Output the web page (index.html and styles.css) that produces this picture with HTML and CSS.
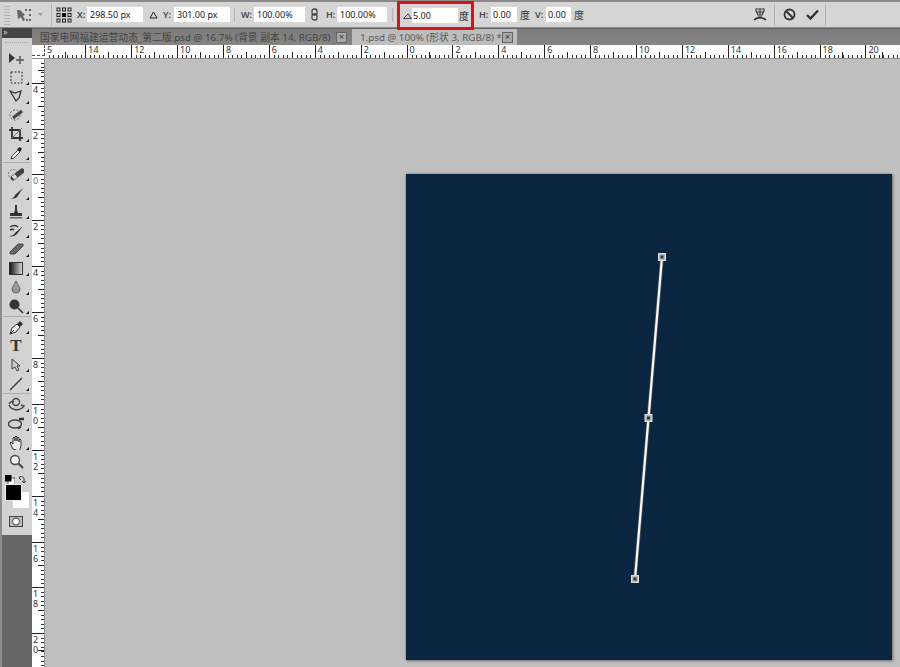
FILE: index.html
```html
<!DOCTYPE html>
<html lang="zh">
<head>
  <meta charset="UTF-8" />
  <title>Photoshop</title>
  <link rel="stylesheet" href="styles.css">
</head>
<body>

<!-- OPTIONS BAR -->
<div class="optionbar">
  <div class="grip"></div>
  <svg class="tool-ico" width="16" height="14" viewBox="0 0 16 14"><path d="M1 2h3l5 5-2 1 2 4-2 1-2-4-3 2z" fill="#666"/><g fill="#666"><rect x="9" y="1" width="2" height="2"/><rect x="13" y="1" width="2" height="2"/><rect x="13" y="6" width="2" height="2"/><rect x="13" y="11" width="2" height="2"/><rect x="10" y="11" width="2" height="2"/></g></svg>
  <svg class="arrow" width="5" height="3" viewBox="0 0 5 3"><path d="M0 0h5L2.500 3z" fill="#999"/></svg>
  <div class="sep sep-a"></div>
  <svg class="ref-ico" width="16" height="16" viewBox="0 0 16 16">
    <g fill="none" stroke="#222"><rect x="1" y="1" width="3" height="3"/><rect x="6.500" y="1" width="3" height="3"/><rect x="12" y="1" width="3" height="3"/><rect x="1" y="6.500" width="3" height="3"/><rect x="12" y="6.500" width="3" height="3"/><rect x="1" y="12" width="3" height="3"/><rect x="6.500" y="12" width="3" height="3"/><rect x="12" y="12" width="3" height="3"/></g>
    <rect x="6" y="6" width="4" height="4" fill="#111"/>
  </svg>
  <span class="lbl lbl-x">X:</span>
  <div class="field f56">298.50 px</div>
  <svg class="delta" width="9" height="8" viewBox="0 0 9 8"><path d="M4.500 1L8 7H1z" fill="none" stroke="#222"/></svg>
  <span class="lbl lbl-y">Y:</span>
  <div class="field f56">301.00 px</div>
  <div class="sep sep-b"></div>
  <span class="lbl lbl-w">W:</span>
  <div class="field f51">100.00%</div>
  <svg class="chain" width="7" height="13" viewBox="0 0 7 13"><rect x="1" y="1" width="5" height="6" rx="2" fill="none" stroke="#444" stroke-width="1.300"/><rect x="1" y="6" width="5" height="6" rx="2" fill="none" stroke="#444" stroke-width="1.300"/></svg>
  <span class="lbl lbl-h">H:</span>
  <div class="field f50">100.00%</div>
  <div class="sep sep-c"></div>
  <div class="rotate-box">
    <svg class="angle" width="9" height="7" viewBox="0 0 9 7"><path d="M0.500 6.500h8L5 2z" fill="none" stroke="#444"/></svg>
    <div class="field f46">5.00</div>
    <span class="deg">度</span>
  </div>
  <span class="lbl lbl-sh">H:</span>
  <div class="field f26">0.00</div>
  <span class="deg deg-b">度</span>
  <span class="lbl lbl-v">V:</span>
  <div class="field f25">0.00</div>
  <span class="deg deg-b">度</span>

  <div class="commit">
    <svg width="14" height="15" viewBox="0 0 14 15"><path d="M3 2h8v2l-2 4H5L3 4zM7 2v6M3.500 5h7M5 10h4" fill="none" stroke="#333" stroke-width="1.100"/><path d="M1 13c3-3 9-3 12 0" fill="none" stroke="#222" stroke-width="1.400"/></svg>
    <div class="sep sep-d"></div>
    <svg class="cancel" width="13" height="13" viewBox="0 0 13 13"><circle cx="6.500" cy="6.500" r="5" fill="none" stroke="#333" stroke-width="1.800"/><path d="M3 3l7 7" stroke="#333" stroke-width="1.800"/></svg>
    <svg class="check" width="13" height="11" viewBox="0 0 13 11"><path d="M1 6l3.500 3.500L12 1.500" fill="none" stroke="#333" stroke-width="2.400"/></svg>
    <div class="sep sep-e"></div>
  </div>
</div>

<div class="main">

  <!-- TOOLS -->
  <div class="toolbar">
    <div class="collapse">»</div>
    <div class="tool-grip"></div>
    <div class="tools">
      <div class="tool tool-first"><svg width="18" height="14" viewBox="0 0 18 14"><path d="M2 1l6 5-6 5z" fill="#333"/><path d="M13 4v8M9 8h8" stroke="#555" stroke-width="1.500"/></svg></div>
      <div class="tool more"><svg width="13" height="13" viewBox="0 0 13 13"><rect x="1" y="1" width="11" height="11" fill="none" stroke="#333" stroke-dasharray="2 1.500"/></svg></div>
      <div class="tool more"><svg width="14" height="14" viewBox="0 0 14 14"><path d="M1 2l5 2 6-2-2 7-3 3-3-5z" fill="none" stroke="#333" stroke-width="1.300"/></svg></div>
      <div class="tool more"><svg width="15" height="14" viewBox="0 0 15 14"><circle cx="6" cy="7" r="5" fill="none" stroke="#666" stroke-dasharray="2 1.500"/><path d="M4 10l9-7" stroke="#444" stroke-width="3"/></svg></div>
      <div class="tool more"><svg width="14" height="14" viewBox="0 0 14 14"><path d="M3 0v11h11M0 3h11v11" fill="none" stroke="#333" stroke-width="1.800"/><path d="M3 11L13 1" stroke="#777"/></svg></div>
      <div class="tool more"><svg width="14" height="15" viewBox="0 0 14 15"><path d="M2 13l1-3 6-6 2 2-6 6z" fill="#eee" stroke="#444"/><path d="M8 3l3-2 2 2-2 3z" fill="#222"/></svg></div>
      <div class="tool-sep"></div>
      <div class="tool more"><svg width="16" height="14" viewBox="0 0 16 14"><circle cx="5" cy="7" r="4.500" fill="none" stroke="#777" stroke-dasharray="2 1.500"/><path d="M5 11l9-7" stroke="#444" stroke-width="5" stroke-linecap="round"/><path d="M5 11l3-2.400" stroke="#ddd" stroke-width="4"/></svg></div>
      <div class="tool more"><svg width="16" height="14" viewBox="0 0 16 14"><path d="M1 12c3 1 5 0 6-3l8-7-6 9c-2 2-5 2-8 1z" fill="#333"/></svg></div>
      <div class="tool more"><svg width="14" height="15" viewBox="0 0 14 15"><path d="M6 1h2v5l1 3h4v3H1V9h4l1-3z" fill="#333"/><rect x="1" y="13" width="12" height="1.500" fill="#666"/></svg></div>
      <div class="tool more"><svg width="16" height="14" viewBox="0 0 16 14"><path d="M1 12c3 0 5-1 6-3l8-7-6 8c-2 2-5 3-8 2z" fill="#333"/><path d="M2 3c3-2 6-2 8 0M2 6c2-1 3-1 4 0" fill="none" stroke="#333" stroke-width="1.500"/></svg></div>
      <div class="tool more"><svg width="15" height="12" viewBox="0 0 15 12"><path d="M1 9l8-8h5v2l-8 8H1z" fill="#666" stroke="#444"/></svg></div>
      <div class="tool more"><svg width="14" height="13" viewBox="0 0 14 13"><defs><linearGradient id="grad"><stop offset="0" stop-color="#111"/><stop offset="1" stop-color="#ddd"/></linearGradient></defs><rect x="0.500" y="0.500" width="13" height="12" fill="url(#grad)" stroke="#333"/></svg></div>
      <div class="tool more"><svg width="10" height="14" viewBox="0 0 10 14"><path d="M5 1c2 4 4 6 4 8a4 4 0 0 1-8 0c0-2 2-4 4-8z" fill="#999" stroke="#666"/></svg></div>
      <div class="tool more"><svg width="15" height="15" viewBox="0 0 15 15"><circle cx="5.500" cy="5.500" r="5" fill="#333"/><path d="M9 9l5 5" stroke="#333" stroke-width="1.600"/></svg></div>
      <div class="tool-sep"></div>
      <div class="tool more"><svg width="15" height="15" viewBox="0 0 15 15"><path d="M1 14l2-6 5-4 3 3-4 5z" fill="#eee" stroke="#333"/><path d="M8 4l3-3 3 3-3 3z" fill="#333"/><path d="M1 14l4-4" stroke="#333"/></svg></div>
      <div class="tool"><span class="t-glyph">T</span></div>
      <div class="tool more"><svg width="10" height="14" viewBox="0 0 10 14"><path d="M1 1v10l3-2 2 4 2-1-2-4h3z" fill="#ccc" stroke="#444"/></svg></div>
      <div class="tool more"><svg width="14" height="14" viewBox="0 0 14 14"><path d="M1 13L13 1" stroke="#333" stroke-width="1.200"/></svg></div>
      <div class="tool-sep"></div>
      <div class="tool more"><svg width="17" height="15" viewBox="0 0 17 15"><circle cx="8" cy="5" r="3.500" fill="none" stroke="#444" stroke-width="1.400"/><path d="M1 7c2-3 4-3 5-2M1 8c2 5 9 6 13 3l2-2-3-1" fill="none" stroke="#444" stroke-width="1.500"/></svg></div>
      <div class="tool more"><svg width="18" height="15" viewBox="0 0 18 15"><path d="M12 3h5" stroke="#333" stroke-width="2.500"/><ellipse cx="8" cy="8" rx="6.500" ry="4" fill="none" stroke="#444" stroke-width="1.400"/><path d="M11 13l3-2" stroke="#333" stroke-width="1.500"/></svg></div>
      <div class="tool more"><svg width="15" height="15" viewBox="0 0 15 15"><path d="M4 14L1 8l1-1 2 2V3l1-1 1 1v3-4l1-1 1 1v4-3l1-1 1 1v4-2l1-1 1 1v6l-1 3-1 2z" fill="#eee" stroke="#333" stroke-linejoin="round"/></svg></div>
      <div class="tool"><svg width="15" height="15" viewBox="0 0 15 15"><circle cx="6" cy="6" r="4.500" fill="#eee" stroke="#444" stroke-width="1.300"/><path d="M9.500 9.500L14 14" stroke="#444" stroke-width="2"/></svg></div>
    </div>

    <div class="swap-row">
      <svg width="10" height="10" viewBox="0 0 10 10"><rect x="3" y="3" width="7" height="7" fill="#fff" stroke="#555"/><rect x="0" y="0" width="6.500" height="6.500" fill="#000"/></svg>
      <svg width="9" height="9" viewBox="0 0 9 9"><path d="M1 3c1-2 3-2 5 0v5M1 3l2-2M1 3l2 2M6 8L4 6M6 8l2-2" fill="none" stroke="#333"/></svg>
    </div>
    <div class="swatches">
      <div class="swatch-bg"></div>
      <div class="swatch-fg"></div>
    </div>
    <div class="mask-btn"><svg width="14" height="11" viewBox="0 0 14 11"><rect x="0.500" y="0.500" width="13" height="10" fill="#bbb" stroke="#444"/><circle cx="7" cy="5.500" r="3.500" fill="#fff" stroke="#444"/></svg></div>
    <div class="toolbar-rest"></div>
  </div>

  <div class="workspace">

    <!-- DOCUMENT TABS -->
    <div class="tabs">
      <div class="tab">
        <span>国家电网福建运营动态_第二版.psd @ 16.7% (背景 副本 14, RGB/8)</span>
        <span class="tab-x">×</span>
      </div>
      <div class="tab active">
        <span>1.psd @ 100% (形状 3, RGB/8) *</span>
        <span class="tab-x">×</span>
      </div>
    </div>

    <!-- RULERS -->
    <div class="hruler">
      <div class="corner"></div>
      <div class="hcell first">5</div>
      <div class="hcell">14</div>
      <div class="hcell">12</div>
      <div class="hcell">10</div>
      <div class="hcell">8</div>
      <div class="hcell">6</div>
      <div class="hcell">4</div>
      <div class="hcell">2</div>
      <div class="hcell">0</div>
      <div class="hcell">2</div>
      <div class="hcell">4</div>
      <div class="hcell">6</div>
      <div class="hcell">8</div>
      <div class="hcell">10</div>
      <div class="hcell">12</div>
      <div class="hcell">14</div>
      <div class="hcell">16</div>
      <div class="hcell">18</div>
      <div class="hcell last">20</div>
    </div>

    <div class="stage">
      <div class="vruler">
        <div class="vcell first"></div>
        <div class="vcell">4</div>
        <div class="vcell">2</div>
        <div class="vcell zero">0</div>
        <div class="vcell">2</div>
        <div class="vcell">4</div>
        <div class="vcell">6</div>
        <div class="vcell">8</div>
        <div class="vcell">1 0</div>
        <div class="vcell">1 2</div>
        <div class="vcell">1 4</div>
        <div class="vcell">1 6</div>
        <div class="vcell">1 8</div>
        <div class="vcell last">2 0</div>
      </div>

      <div class="canvas">
        <div class="doc">
          <svg class="shape" width="486" height="486" viewBox="0 0 486 486">
            <line x1="256" y1="83" x2="229" y2="405" stroke="#555" stroke-width="3.600"/>
            <line x1="256" y1="83" x2="229" y2="405" stroke="#f8f8f8" stroke-width="2.200"/>
            <g fill="#b5b5b5" stroke="#ddd">
              <rect x="252.500" y="79.500" width="7" height="7"/>
              <rect x="239" y="240.500" width="7" height="7"/>
              <rect x="225.500" y="401.500" width="7" height="7"/>
            </g>
            <g fill="#333">
              <rect x="254.500" y="81.500" width="3" height="3"/>
              <rect x="241" y="242.500" width="3" height="3"/>
              <rect x="227.500" y="403.500" width="3" height="3"/>
            </g>
          </svg>
        </div>
      </div>
    </div>

  </div>
</div>

</body>
</html>
```
FILE: styles.css
```css
html, body {
  margin: 0;
  height: 100%;
}

body {
  width: 900px;
  height: 667px;
  overflow: hidden;
  display: flex;
  flex-direction: column;
  background: #bfbfbf;
  color: #222;
  font-family: "Noto Sans", "Noto Sans CJK SC", sans-serif;
  font-size: 9px;
}

/* options bar */
.optionbar {
  height: 28px;
  box-sizing: border-box;
  flex: none;
  display: flex;
  align-items: center;
  background: #d5d5d5;
  border-top: 2px solid #8b8b8b;
  border-bottom: 1px solid #8a8a8a;
}

.grip {
  width: 6px;
  height: 20px;
  margin-left: 4px;
  background: repeating-linear-gradient(0deg, #b0b0b0 0 1px, transparent 1px 3px);
}

.tool-ico { margin-left: 6px; }
.arrow { margin-left: 6px; }

.sep {
  width: 1px;
  height: 22px;
  background: #b4b4b4;
  flex: none;
}

.sep-a { margin-left: 8px; }
.sep-b { margin-left: 4px; height: 14px; }
.sep-c { margin-left: 5px; height: 14px; }
.sep-d { margin: 0 7px; }
.sep-e { margin-left: 6px; }

.ref-ico { margin-left: 4px; }

.lbl {
  flex: none;
  color: #444;
  font-weight: 600;
}

.lbl-x { margin-left: 5px; width: 10px; }
.lbl-y { margin-left: 5px; width: 11px; }
.lbl-w { margin-left: 6px; width: 13px; }
.lbl-h { margin-left: 8px; width: 11px; }
.lbl-sh { margin-left: 5px; width: 12px; }
.lbl-v { margin-left: 4px; width: 11px; }

.field {
  height: 15px;
  line-height: 15px;
  flex: none;
  box-sizing: border-box;
  padding-left: 3px;
  background: #fff;
  white-space: nowrap;
}

.f56 { width: 56px; }
.f51 { width: 51px; }
.f50 { width: 50px; }
.f46 { width: 46px; padding-left: 1px; }
.f26 { width: 26px; padding-left: 2px; }
.f25 { width: 25px; padding-left: 2px; }

.delta { margin-left: 6px; }
.chain { margin-left: 6px; }

.rotate-box {
  flex: none;
  position: relative;
  z-index: 2;
  width: 77px;
  height: 29px;
  margin: 2px 0 0 4px;
  box-sizing: border-box;
  display: flex;
  align-items: center;
  border: 3px solid #d8121a;
}

.angle { margin-left: 3px; }

.deg {
  width: 11px;
  margin-left: 1px;
  font-size: 10px;
  color: #333;
  flex: none;
}

.deg-b { margin-left: 3px; }

.commit {
  margin-left: auto;
  margin-right: 74px;
  display: flex;
  align-items: center;
}

.cancel { margin-left: 1px; }
.check { margin-left: 10px; }

/* layout below the options bar */
.main {
  flex: 1;
  display: flex;
  min-height: 0;
}

/* tools */
.toolbar {
  width: 30px;
  flex: none;
  display: flex;
  flex-direction: column;
  background: #d2d2d2;
  border-left: 2px solid #8c8c8c;
}

.collapse {
  height: 10px;
  line-height: 8px;
  padding-left: 1px;
  background: #444;
  color: #ccc;
  font-size: 9px;
}

.tool-grip {
  height: 1px;
  margin: 4px 3px 6px;
  border-top: 1px dotted #aaa;
}

.tools {
  display: flex;
  flex-direction: column;
}

.tool {
  height: 18.9px;
  flex: none;
  position: relative;
  box-sizing: border-box;
  padding-right: 2px;
  display: flex;
  align-items: center;
  justify-content: center;
}

.tool-first { height: 18px; }

.more::after {
  content: "";
  position: absolute;
  right: 3px;
  bottom: 2px;
  border-left: 3px solid transparent;
  border-bottom: 3px solid #111;
}

.tool-sep {
  height: 1px;
  margin: 0 1px 1px;
  background: #adadad;
}

.t-glyph {
  font-family: "Liberation Serif", serif;
  font-size: 17px;
  font-weight: bold;
  color: #333;
}

.swap-row {
  display: flex;
  justify-content: space-between;
  padding: 0 5px 0 3px;
  margin-top: 4px;
  height: 9px;
}

.swatches {
  position: relative;
  height: 28px;
  flex: none;
}

.swatch-fg {
  position: absolute;
  left: 3px;
  top: 0;
  width: 15px;
  height: 15px;
  background: #000;
  border: 1px solid #eee;
}

.swatch-bg {
  position: absolute;
  left: 11px;
  top: 8px;
  width: 16px;
  height: 16px;
  background: #fff;
}

.mask-btn {
  height: 20px;
  flex: none;
  padding-right: 2px;
  display: flex;
  align-items: center;
  justify-content: center;
}

.toolbar-rest {
  flex: 1;
  margin-top: 3px;
  background: #666;
}

/* tabs */
.workspace {
  flex: 1;
  min-width: 0;
  display: flex;
  flex-direction: column;
}

.tabs {
  height: 17px;
  flex: none;
  display: flex;
  background: linear-gradient(#7b7b7b, #858585);
  border-top: 1px solid #666;
  box-sizing: border-box;
  color: #444;
  font-size: 9.8px;
}

.tab {
  width: 320px;
  box-sizing: border-box;
  padding: 0 5px 0 8px;
  display: flex;
  justify-content: space-between;
  align-items: center;
  white-space: nowrap;
}

.tab.active {
  width: 165px;
  background: #bdbdbd;
  color: #5a5a5a;
}

.tab-x {
  width: 9px;
  height: 9px;
  line-height: 8px;
  text-align: center;
  background: #a8a8a8;
  border: 1px solid #666;
  color: #333;
  font-size: 9px;
  flex: none;
}

/* rulers */
.hruler {
  height: 14px;
  box-sizing: border-box;
  flex: none;
  display: flex;
  background: #fff;
  border-bottom: 1px solid #8c8c8c;
  font-size: 9px;
  line-height: 10px;
  color: #333;
}

.corner {
  width: 13px;
  flex: none;
  box-sizing: border-box;
  border-right: 1px dashed #555;
  border-bottom: 1px dashed #555;
  height: 11px;
}

.hcell {
  width: 45.9px;
  flex: none;
  box-sizing: border-box;
  padding-left: 2px;
  border-left: 1px solid #222;
  background:
    linear-gradient(#222, #222) 50% 100% / 1px 6px no-repeat,
    repeating-linear-gradient(90deg, transparent 0 3.6px, #333 3.6px 4.59px) 0 100% / 100% 3px no-repeat;
}

.hcell.first {
  width: 40.3px;
  border-left: 0;
}

.hcell.last { width: 33px; }

.stage {
  flex: 1;
  min-height: 0;
  display: flex;
}

.vruler {
  width: 13px;
  flex: none;
  background: #fff;
  border-right: 1px solid #8c8c8c;
  box-sizing: border-box;
  font-size: 9px;
  line-height: 10px;
  color: #333;
}

.vcell {
  height: 45.9px;
  box-sizing: border-box;
  padding: 1px 6px 0 1px;
  word-break: break-all;
  border-top: 1px solid #222;
  background:
    linear-gradient(#222, #222) 100% 50% / 6px 1px no-repeat,
    repeating-linear-gradient(180deg, transparent 0 3.6px, #333 3.6px 4.59px) 100% 0 / 3px 100% no-repeat;
}

.vcell.first {
  height: 23.7px;
  border-top: 0;
}

.vcell.last { height: 33px; }

.vcell.zero { color: #5c7a5c; }

.canvas {
  flex: 1;
  min-width: 0;
  padding: 115px 0 0 361px;
  box-sizing: border-box;
  background: #bfbfbf;
}

.doc {
  width: 486px;
  height: 486px;
  background: #0a2540;
  box-shadow: 1px 1px 3px rgba(0, 0, 0, 0.35), 0 0 2px rgba(0, 0, 0, 0.3);
}

.shape { display: block; }
```
